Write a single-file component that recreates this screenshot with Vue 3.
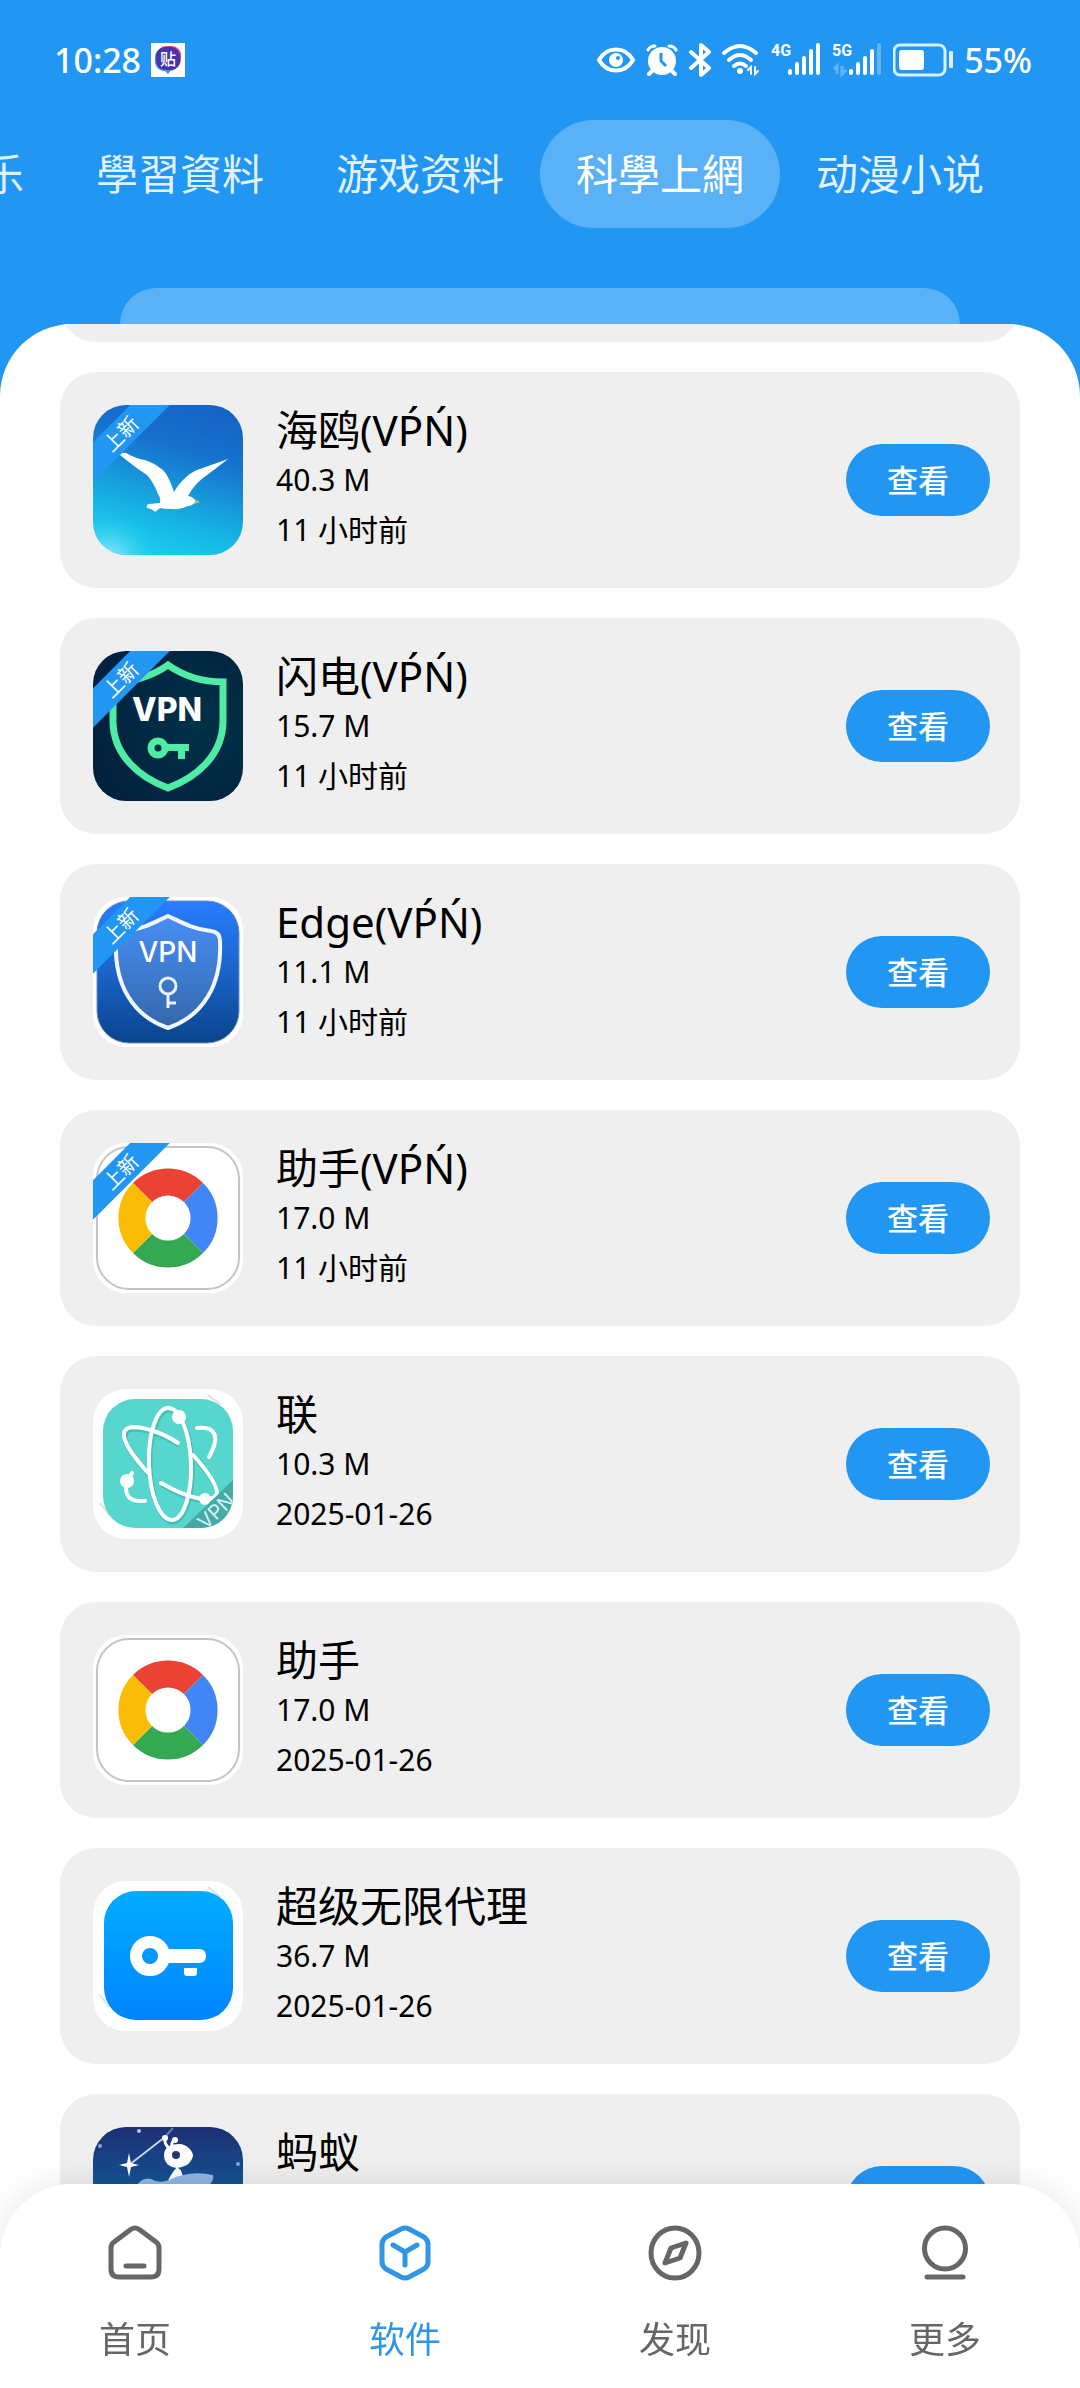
<template>
  <div class="app">
    <header class="header">
      <!-- 系统状态栏 -->
      <div class="status">
        <div class="status-left">
          <span>10:28</span>
          <svg width="34" height="34" viewBox="0 0 34 34">
            <rect width="34" height="34" fill="#fff" />
            <path d="M12 26 L17 31 L21 26Z" fill="#2196f3" />
            <rect x="4" y="5" width="24" height="23" rx="9" fill="#38a0ea" />
            <rect x="6" y="3" width="24" height="23" rx="9" fill="#d8458f" />
            <rect x="5" y="4" width="24" height="23" rx="9" fill="#4a33a8" />
            <text x="17" y="22" text-anchor="middle" class="tie">贴</text>
          </svg>
        </div>
        <div class="status-right">
          <svg width="38" height="36" viewBox="0 0 38 36" fill="none" stroke="#fff" stroke-width="4">
            <path d="M2 18 C10 4 28 4 36 18 C28 32 10 32 2 18Z" stroke-linejoin="round" />
            <circle cx="19" cy="18" r="7" fill="#fff" stroke="none" />
            <circle cx="21" cy="16" r="2" fill="#2196f3" stroke="none" />
          </svg>
          <svg width="32" height="36" viewBox="0 0 32 36" fill="none" stroke="#fff" stroke-width="4" stroke-linecap="round">
            <circle cx="16" cy="19" r="14" fill="#fff" stroke="none" />
            <path d="M2 8 Q4 4 9 4 M30 8 Q28 4 23 4" stroke-width="3" />
            <path d="M6 29 L3 32 M26 29 L29 32" />
            <path d="M15 11 V19 L20 24" stroke="#2196f3" stroke-width="3" stroke-linecap="butt" />
          </svg>
          <svg width="22" height="36" viewBox="0 0 22 36" fill="none" stroke="#fff" stroke-width="4" stroke-linecap="round" stroke-linejoin="round">
            <path d="M2 10 L20 26 L12 33 V3 L20 10 L2 26" />
          </svg>
          <svg width="38" height="36" viewBox="0 0 38 36" fill="none" stroke="#fff" stroke-width="4" stroke-linecap="round">
            <path d="M2 11 Q18 -3 34 11" />
            <path d="M7 18 Q18 8 29 18" />
            <path d="M12 24 Q18 19 24 24" />
            <circle cx="18" cy="29" r="3" fill="#fff" stroke="none" />
            <path d="M29 32 V25 L26 28 M33 25 V32 L36 29" stroke-width="2" />
          </svg>
          <svg width="50" height="36" viewBox="0 0 50 36" fill="#fff">
            <text x="0" y="14" class="net">4G</text>
            <rect x="17" y="27" width="4" height="6" rx="2" />
            <rect x="24" y="20" width="4" height="13" rx="2" />
            <rect x="31" y="14" width="4" height="19" rx="2" />
            <rect x="38" y="7" width="4" height="26" rx="2" />
            <rect x="45" y="1" width="4" height="32" rx="2" />
          </svg>
          <svg width="50" height="36" viewBox="0 0 50 36" fill="#fff">
            <text x="0" y="14" class="net">5G</text>
            <path d="M5 32 V24 L2 27 M10 24 V32 L14 28" fill="none" stroke="#fff" stroke-width="3" opacity="0.3" />
            <rect x="17" y="27" width="4" height="6" rx="2" />
            <rect x="24" y="20" width="4" height="13" rx="2" />
            <rect x="31" y="14" width="4" height="19" rx="2" />
            <rect x="38" y="7" width="4" height="26" rx="2" />
            <rect x="45" y="1" width="4" height="32" rx="2" opacity="0.3" />
          </svg>
          <svg width="60" height="36" viewBox="0 0 60 36" fill="none">
            <rect x="1" y="3" width="51" height="30" rx="6" stroke="#d8f2ff" stroke-width="3" />
            <rect x="6" y="8" width="25" height="20" rx="3" fill="#fff" />
            <rect x="56" y="9" width="4" height="17" rx="1" fill="#d8f2ff" />
          </svg>
          <span>55%</span>
        </div>
      </div>

      <!-- 分类标签 -->
      <nav class="tabs">
        <button
          v-for="tab in tabs"
          :key="tab"
          type="button"
          :class="['tab', { active: tab === activeTab }]"
          @click="activeTab = tab"
        >
          {{ tab }}
        </button>
      </nav>

      <div class="search-edge"></div>
    </header>

    <main class="sheet">
      <ul class="list">
        <!-- 已滚出顶部的卡片 -->
        <li class="card"></li>
        <li v-for="item in apps" :key="item.name" class="card">
          <div class="icon">
            <!-- 海鸥 -->
            <svg v-if="item.icon === 'gull'" viewBox="0 0 150 150">
              <defs>
                <linearGradient id="gull-bg" x1="0.7" y1="0" x2="0.4" y2="1">
                  <stop offset="0" stop-color="#1663c6" />
                  <stop offset="0.3" stop-color="#1672cd" />
                  <stop offset="0.8" stop-color="#17b9e6" />
                  <stop offset="1" stop-color="#1ccaee" />
                </linearGradient>
                <radialGradient id="gull-glow" cx="0.1" cy="1.05" r="0.35">
                  <stop offset="0" stop-color="#a5effa" />
                  <stop offset="1" stop-color="#1ccaee" stop-opacity="0" />
                </radialGradient>
              </defs>
              <rect width="150" height="150" fill="url(#gull-bg)" />
              <rect width="150" height="150" fill="url(#gull-glow)" />
              <path d="M95 91 L107 97 L98 100Z" fill="#c9c25a" />
              <path
                d="M27 50 Q29 47 33 48 Q44 54 52 55 Q61 58 67 63 Q74 66 81 87 Q85 80 90 75 Q98 67 104 65 L135 54 Q121 65 110 73 Q101 80 95 91 Q102 92 102 97 Q99 101 95 101 Q88 105 80 104 Q71 104 67 103 L62 107 Q60 104 54 103 Q53 99 56 99 L67 98 Q68 93 65 89 Q61 78 54 70 Q43 63 27 50Z"
                fill="#fff"
              />
            </svg>

            <!-- 绿色盾牌 -->
            <svg v-else-if="item.icon === 'bolt'" viewBox="0 0 150 150">
              <defs>
                <radialGradient id="bolt-bg" cx="0.7" cy="0.5" r="0.7">
                  <stop offset="0" stop-color="#013247" />
                  <stop offset="1" stop-color="#02213f" />
                </radialGradient>
              </defs>
              <rect width="150" height="150" fill="url(#bolt-bg)" />
              <path
                d="M75 14 C92 26 112 31 130 31 V70 C130 103 105 126 75 137 C45 126 20 103 20 70 V31 C38 31 58 26 75 14Z"
                fill="none"
                stroke="#50eca6"
                stroke-width="7"
              />
              <text x="74" y="70" text-anchor="middle" class="vpn-bold">VPN</text>
              <circle cx="65" cy="97" r="7" fill="none" stroke="#50eca6" stroke-width="7" />
              <path d="M74 93 H96 V100 H92 V108 H85 V100 H74Z" fill="#50eca6" />
            </svg>

            <!-- 蓝色盾牌 -->
            <svg v-else-if="item.icon === 'edge'" viewBox="0 0 150 150">
              <defs>
                <linearGradient id="edge-bg" x1="0" y1="0" x2="0" y2="1">
                  <stop offset="0" stop-color="#297dff" />
                  <stop offset="0.5" stop-color="#1a63c8" />
                  <stop offset="1" stop-color="#0a448c" />
                </linearGradient>
              </defs>
              <rect width="150" height="150" fill="#fff" />
              <rect x="4" y="4" width="142" height="142" rx="32" fill="url(#edge-bg)" stroke="#6d8fc4" />
              <path
                d="M75 19 C88 25 100 32 118 34 Q127 35 127 44 C129 88 110 119 75 131 C40 119 21 88 23 44 Q23 35 32 34 C50 32 62 25 75 19Z"
                fill="#fff"
                fill-opacity="0.16"
                stroke="#f0f7ff"
                stroke-width="4"
              />
              <text x="75" y="65" text-anchor="middle" class="vpn">VPN</text>
              <circle cx="75" cy="89" r="8" fill="none" stroke="#e9f2ff" stroke-width="3" />
              <path d="M75 97 V111 M75 106 H83" stroke="#e9f2ff" stroke-width="3" />
            </svg>

            <!-- 四色圆环 -->
            <svg v-else-if="item.icon === 'ring'" viewBox="0 0 150 150">
              <rect width="150" height="150" fill="#fff" />
              <rect x="4" y="4" width="142" height="142" rx="32" fill="none" stroke="#c4c4c4" stroke-width="2" />
              <g fill="none" stroke-width="27">
                <path d="M49.5 49.5 A36 36 0 0 1 100.5 49.5" stroke="#ea4335" />
                <path d="M100.5 49.5 A36 36 0 0 1 100.5 100.5" stroke="#4285f4" />
                <path d="M100.5 100.5 A36 36 0 0 1 49.5 100.5" stroke="#34a853" />
                <path d="M49.5 100.5 A36 36 0 0 1 49.5 49.5" stroke="#fbbc05" />
              </g>
            </svg>

            <!-- 原子轨道 -->
            <svg v-else-if="item.icon === 'atom'" viewBox="0 0 150 150">
              <defs>
                <clipPath id="atom-clip">
                  <rect x="10" y="10" width="130" height="129" rx="32" />
                </clipPath>
              </defs>
              <rect width="150" height="150" fill="#fff" />
              <path d="M115 6 L128 16 M7 114 L16 126" stroke="#e2e2e2" stroke-width="2" />
              <g clip-path="url(#atom-clip)">
                <rect x="10" y="10" width="130" height="129" fill="#57d6ce" />
                <g fill="none" stroke="#2fa79f" stroke-opacity="0.5" stroke-width="5" transform="translate(1 2)">
                  <ellipse cx="77" cy="75" rx="21" ry="56" transform="rotate(-2 77 75)" />
                  <path d="M85 54 C70 44 52 38 39 38 C24 40 30 56 55 84" />
                  <path d="M100 66 C116 84 124 96 124 104 C121 115 98 111 68 94" />
                </g>
                <g fill="none" stroke="#fff" stroke-width="4" stroke-linecap="round">
                  <ellipse cx="77" cy="75" rx="21" ry="56" transform="rotate(-2 77 75)" />
                  <path d="M85 54 C70 44 52 38 39 38 C24 40 30 56 55 84" />
                  <path d="M104 39 C122 37 128 47 116 68" />
                  <path d="M100 66 C116 84 124 96 124 104 C121 115 98 111 68 94" />
                  <path d="M39 84 L34 92 C30 108 38 113 52 112" />
                </g>
                <circle cx="86" cy="28" r="7" fill="#fff" />
                <circle cx="34" cy="92" r="7" fill="#fff" />
                <circle cx="112" cy="110" r="6" fill="#fff" />
                <path d="M90 139 L140 91 V139Z" fill="#45aaa7" />
                <text x="123" y="129" text-anchor="middle" transform="rotate(-43 123 122)" class="vpn-thin">VPN</text>
              </g>
            </svg>

            <!-- 钥匙 -->
            <svg v-else-if="item.icon === 'key'" viewBox="0 0 150 150">
              <defs>
                <linearGradient id="key-bg" x1="0" y1="0" x2="0" y2="1">
                  <stop offset="0" stop-color="#00adff" />
                  <stop offset="1" stop-color="#0084ff" />
                </linearGradient>
              </defs>
              <rect width="150" height="150" fill="#fff" />
              <path d="M115 6 L128 16 M7 114 L16 126" stroke="#e2e2e2" stroke-width="2" />
              <rect x="11" y="10" width="129" height="129" rx="32" fill="url(#key-bg)" />
              <circle cx="57" cy="75" r="14" fill="none" stroke="#fff" stroke-width="12" />
              <path d="M74 68 H106 Q113 68 113 75 Q113 82 106 82 H74Z" fill="#fff" />
              <path d="M91 87 H104 V92 Q104 95 101 95 H94 Q91 95 91 92Z" fill="#fff" />
            </svg>

            <!-- 蚂蚁 -->
            <svg v-else viewBox="0 0 150 150">
              <defs>
                <linearGradient id="ant-bg" x1="0" y1="0" x2="0" y2="1">
                  <stop offset="0" stop-color="#1d2f73" />
                  <stop offset="0.4" stop-color="#145596" />
                  <stop offset="1" stop-color="#1180c0" />
                </linearGradient>
              </defs>
              <rect width="150" height="150" fill="url(#ant-bg)" />
              <path d="M36 38 L72 10" stroke="#c5d3ee" stroke-width="2" />
              <path d="M72 10 L80 1" stroke="#6f80b5" stroke-width="2" />
              <path d="M36 26 L38 36 L46 38 L38 40 L36 50 L34 40 L26 38 L34 36Z" fill="#fff" />
              <circle cx="46" cy="4" r="2" fill="#b9c5e8" />
              <circle cx="7" cy="19" r="2" fill="#8ea2d4" />
              <circle cx="145" cy="37" r="2" fill="#8ea2d4" />
              <path d="M72 11 Q71 17 76 21 M81 13 Q78 16 79 20" fill="none" stroke="#fff" stroke-width="3" />
              <circle cx="72" cy="11" r="3" fill="#fff" />
              <circle cx="82" cy="13" r="3" fill="#fff" />
              <path d="M71 28 C71 20 78 17 86 17 C94 17 100 24 100 29 C98 37 92 40 84 41 C76 40 71 36 71 28Z" fill="#fff" />
              <circle cx="83" cy="28" r="4" fill="#23386f" />
              <path d="M84 40 Q91 44 90 56 H74 Q77 48 84 40Z" fill="#fff" />
              <path d="M44 58 Q50 50 58 52 Q66 57 76 53 Q96 43 120 48 Q122 56 108 64 H44Z" fill="#8fb5e2" />
            </svg>

            <span v-if="item.isNew" class="ribbon">上新</span>
          </div>
          <div class="info">
            <h2 class="name">{{ item.name }}</h2>
            <p>{{ item.size }}</p>
            <p>{{ item.date }}</p>
          </div>
          <button type="button" class="view">查看</button>
        </li>
      </ul>
    </main>

    <!-- 底部导航 -->
    <nav class="bottom-nav">
      <a
        v-for="nav in navs"
        :key="nav.label"
        href="#"
        :class="['nav-item', { active: nav.label === activeNav }]"
        @click.prevent="activeNav = nav.label"
      >
        <svg width="60" height="60" viewBox="0 0 60 60">
          <path v-for="d in nav.paths" :key="d" :d="d" />
        </svg>
        <span>{{ nav.label }}</span>
      </a>
    </nav>
  </div>
</template>

<script setup>
import { ref } from 'vue';

// 分类标签，当前滚动到最右侧
const tabs = ['娱乐', '學習資料', '游戏资料', '科學上網', '动漫小说'];
const activeTab = ref('科學上網');

// 应用列表，isNew 控制左上角的角标
const apps = [
  { name: '海鸥(VṔŃ)', size: '40.3 M', date: '11 小时前', icon: 'gull', isNew: true },
  { name: '闪电(VṔŃ)', size: '15.7 M', date: '11 小时前', icon: 'bolt', isNew: true },
  { name: 'Edge(VṔŃ)', size: '11.1 M', date: '11 小时前', icon: 'edge', isNew: true },
  { name: '助手(VṔŃ)', size: '17.0 M', date: '11 小时前', icon: 'ring', isNew: true },
  { name: '联', size: '10.3 M', date: '2025-01-26', icon: 'atom', isNew: false },
  { name: '助手', size: '17.0 M', date: '2025-01-26', icon: 'ring', isNew: false },
  { name: '超级无限代理', size: '36.7 M', date: '2025-01-26', icon: 'key', isNew: false },
  { name: '蚂蚁', size: '', date: '', icon: 'ant', isNew: false }
];

// 底部导航，图标按 60x60 画布描边
const navs = [
  {
    label: '首页',
    paths: [
      'M25 7 Q30 3 35 7 L51 19 Q54 21 54 25 V46 Q54 54 46 54 H14 Q6 54 6 46 V25 Q6 21 9 19Z',
      'M21 43 H39'
    ]
  },
  {
    label: '软件',
    paths: [
      'M26 6 Q30 4 34 6 L49 14 Q53 17 53 21 V39 Q53 43 49 46 L34 54 Q30 56 26 54 L11 46 Q7 43 7 39 V21 Q7 17 11 14Z',
      'M18 22 L30 29 L42 22 M30 29 V42'
    ]
  },
  {
    label: '发现',
    paths: [
      'M30 5 A24 25 0 0 1 30 55 A24 25 0 0 1 30 5Z',
      'M41 20 L26 25 L20 40 L35 35Z'
    ]
  },
  {
    label: '更多',
    paths: [
      'M30 5 A20 20 0 0 1 30 46 A20 20 0 0 1 30 5Z',
      'M12 54 H48'
    ]
  }
];
const activeNav = ref('软件');
</script>

<style>
body {
  background: #2196f3;
}
</style>

<style scoped>
.app {
  display: flex;
  flex-direction: column;
  height: 100vh;
  overflow: hidden;
  background: #2196f3;
  font-family: "Noto Sans", "Noto Sans CJK SC", sans-serif;
}

.app button {
  border: none;
  font-family: inherit;
  cursor: pointer;
}

.header {
  flex: none;
}

/* 状态栏 */
.status {
  display: flex;
  align-items: center;
  justify-content: space-between;
  height: 120px;
  padding: 0 48px 0 54px;
  box-sizing: border-box;
  color: #fff;
  font-size: 34px;
  font-weight: 500;
}

.status-left,
.status-right {
  display: flex;
  align-items: center;
}

.status-left {
  gap: 10px;
}

.status-right {
  gap: 11px;
}

.tie {
  fill: #fff;
  font-family: "Noto Sans CJK SC", sans-serif;
  font-size: 16px;
  font-weight: 500;
}

.net {
  font-family: "Liberation Sans Narrow", Roboto, sans-serif;
  font-size: 16px;
  font-weight: 700;
}

/* 分类标签 */
.tabs {
  display: flex;
  justify-content: flex-end;
  padding-right: 60px;
  overflow: hidden;
}

.tab {
  flex: none;
  height: 108px;
  padding: 0 36px 6px;
  border-radius: 54px;
  background: transparent;
  color: rgba(255, 255, 255, 0.88);
  font-size: 42px;
}

.tab.active {
  background: rgba(255, 255, 255, 0.26);
  color: #fff;
}

/* 搜索栏露出的上沿 */
.search-edge {
  height: 36px;
  margin: 60px 120px 0;
  border-radius: 36px 36px 0 0;
  background: rgba(255, 255, 255, 0.26);
}

/* 列表 */
.sheet {
  flex: 1;
  min-height: 0;
  overflow: hidden;
  border-radius: 72px 72px 0 0;
  background: #fff;
}

.list {
  display: flex;
  flex-direction: column;
  gap: 30px;
  margin: -198px 60px 0;
  padding: 0;
  list-style: none;
}

.card {
  display: flex;
  align-items: center;
  gap: 33px;
  height: 216px;
  padding: 0 30px 0 33px;
  box-sizing: border-box;
  border-radius: 36px;
  background: #efefef;
}

.icon {
  position: relative;
  flex: none;
  width: 150px;
  height: 150px;
  border-radius: 33px;
  overflow: hidden;
}

.icon svg {
  display: block;
  width: 100%;
  height: 100%;
}

.vpn-bold,
.vpn,
.vpn-thin {
  fill: #fff;
  font-family: Inter, sans-serif;
}

.vpn-bold {
  font-size: 32px;
  font-weight: 800;
}

.vpn {
  font-size: 28px;
  font-weight: 500;
}

.vpn-thin {
  font-size: 20px;
  fill: #d5f3f1;
}

/* 左上角斜角标 */
.ribbon {
  position: absolute;
  top: 15px;
  left: -32px;
  width: 120px;
  height: 28px;
  background: #2196f3;
  color: #fff;
  font-size: 20px;
  line-height: 28px;
  text-align: center;
  transform: rotate(-45deg);
}

.info {
  flex: 1;
  min-width: 0;
  color: #000;
  font-size: 30px;
  line-height: 50px;
}

.info p {
  min-height: 50px;
  margin: 0;
}

.name {
  margin: 0;
  font-size: 42px;
  font-weight: 400;
  line-height: 50px;
}

.view {
  flex: none;
  width: 144px;
  height: 72px;
  padding: 0 0 3px;
  border-radius: 36px;
  background: #2196f3;
  color: #fff;
  font-size: 31px;
  font-weight: 500;
}

/* 底部导航 */
.bottom-nav {
  position: fixed;
  right: 0;
  bottom: 0;
  left: 0;
  display: flex;
  border-radius: 72px 72px 0 0;
  background: #fff;
  box-shadow: 0 0 36px rgba(0, 0, 0, 0.1);
}

.nav-item {
  display: flex;
  flex: 1;
  flex-direction: column;
  align-items: center;
  gap: 32px;
  padding: 39px 0 23px;
  color: #666;
  font-size: 36px;
  line-height: 50px;
  text-decoration: none;
}

.nav-item svg {
  fill: none;
  stroke: currentColor;
  stroke-width: 5;
  stroke-linecap: round;
  stroke-linejoin: round;
}

.nav-item.active {
  color: #2f95e6;
}
</style>
